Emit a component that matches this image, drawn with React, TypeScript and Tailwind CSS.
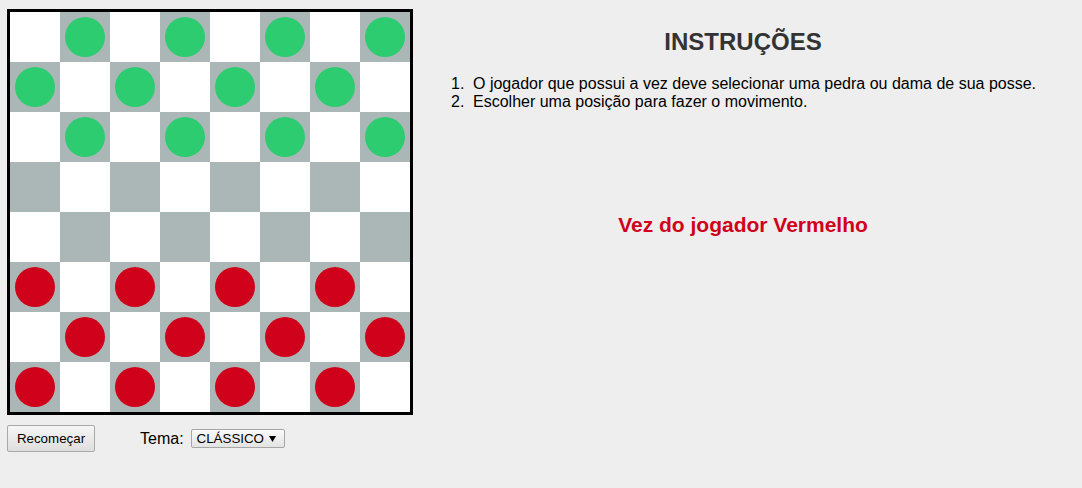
import React from "react";

const rows = [0, 1, 2, 3, 4, 5, 6, 7];

function Cell({ r, c }: { r: number; c: number }) {
  const dark = (r + c) % 2 === 1;
  let piece: string | null = null;
  if (dark && r <= 2) piece = "bg-[#2ecc71]";
  if (dark && r >= 5) piece = "bg-[#d0021b]";
  return (
    <div
      className={`w-[50px] h-[50px] flex items-center justify-center ${
        dark ? "bg-[#abb7b7]" : "bg-white"
      }`}
    >
      {piece && <div className={`w-[40px] h-[40px] rounded-full ${piece}`} />}
    </div>
  );
}

const steps = [
  "O jogador que possui a vez deve selecionar uma pedra ou dama de sua posse.",
  "Escolher uma posição para fazer o movimento.",
];

export default function App() {
  return (
    <div
      className="w-[1082px] h-[488px] bg-[#eeeeee] flex text-black overflow-hidden"
      style={{ fontFamily: '"Liberation Sans", Arial, sans-serif' }}
    >
      <div className="pl-[7px] pt-[9px] flex flex-col">
        <div className="border-[3px] border-black w-[406px]">
          {rows.map((r) => (
            <div key={r} className="flex">
              {rows.map((c) => (
                <Cell key={c} r={r} c={c} />
              ))}
            </div>
          ))}
        </div>
        <div className="flex items-center mt-[10px]">
          <button className="h-[27px] w-[88px] text-[13.33px] text-black border border-[#a9a9a9] rounded-[2px] bg-gradient-to-b from-[#f6f6f6] to-[#dedede] flex items-center justify-center">
            Recomeçar
          </button>
          <span className="ml-[45px] text-[16px] leading-[18px]">Tema:</span>
          <div className="ml-[7px] relative h-[19px] w-[94px] border border-[#a6a6a6] rounded-[2px] bg-gradient-to-b from-[#fafafa] to-[#e3e3e3] flex items-center">
            <span className="pl-[5px] text-[13.33px] leading-[15px]">CLÁSSICO</span>
            <svg
              className="absolute right-[8px] top-[6px]"
              width="7"
              height="6"
              viewBox="0 0 7 6"
            >
              <path d="M0 0 H7 L3.5 6 Z" fill="#000" />
            </svg>
          </div>
        </div>
      </div>
      <div className="ml-[20px] w-[620px] flex flex-col">
        <h1 className="mt-[28px] text-center text-[24px] leading-[28px] font-bold text-[#333333]">
          INSTRUÇÕES
        </h1>
        <ol className="mt-[19px] pl-[18px] text-[16px] leading-[18.4px]">
          {steps.map((s, i) => (
            <li key={i} className="flex">
              <span className="w-[22px] shrink-0">{i + 1}.</span>
              <span>{s}</span>
            </li>
          ))}
        </ol>
        <div className="mt-[101px] text-center text-[21px] leading-[24px] font-bold text-[#d0021b]">
          Vez do jogador Vermelho
        </div>
      </div>
    </div>
  );
}
